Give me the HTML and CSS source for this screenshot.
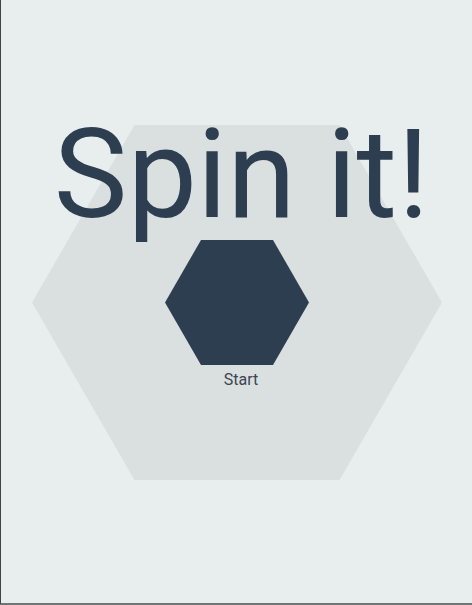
FILE: index.html
```html
<!DOCTYPE html>
<html lang="en">
<head>
<meta charset="utf-8">
<title>Spin it!</title>
<link rel="stylesheet" href="styles.css">
</head>
<body>
<main class="stage">
  <svg class="backdrop" viewBox="0 0 410 355" aria-hidden="true">
    <polygon points="0,177.5 102.5,0 307.5,0 410,177.5 307.5,355 102.5,355" fill="#dadfe0"/>
  </svg>
  <h1 class="title">Spin it!</h1>
  <button class="spinner" type="button">
    <svg class="spinner-hex" viewBox="0 0 144 125" aria-hidden="true">
      <polygon points="0,62.5 36,0 108,0 144,62.5 108,125 36,125" fill="#2c3e50"/>
    </svg>
    <span class="spinner-label">Start</span>
  </button>
</main>
</body>
</html>
```
FILE: styles.css
```css
html, body {
  margin: 0;
  padding: 0;
}
body {
  width: 472px;
  height: 605px;
  box-sizing: border-box;
  background: #e8eeee;
  border-left: 1px solid #3f4440;
  border-bottom: 2px solid #6f7474;
  font-family: Roboto, "Liberation Sans", sans-serif;
  overflow: hidden;
}
.stage {
  position: relative;
  height: 100%;
  display: flex;
  flex-direction: column;
  align-items: center;
}
.backdrop {
  position: absolute;
  left: 31px;
  top: 125px;
  width: 410px;
  height: 355px;
}
.title {
  position: relative;
  margin: 113px 0 0 10px;
  font-size: 124px;
  line-height: 124px;
  font-weight: 400;
  color: #2c3e50;
  white-space: nowrap;
}
.spinner {
  position: relative;
  margin: 3px 0 0 0;
  padding: 0;
  border: 0;
  background: none;
  display: flex;
  flex-direction: column;
  align-items: center;
  gap: 5px;
  font: inherit;
  cursor: pointer;
}
.spinner-hex {
  display: block;
  width: 144px;
  height: 125px;
}
.spinner-label {
  font-size: 16px;
  line-height: 20px;
  color: #3c4550;
  margin-left: 9px;
}
```
